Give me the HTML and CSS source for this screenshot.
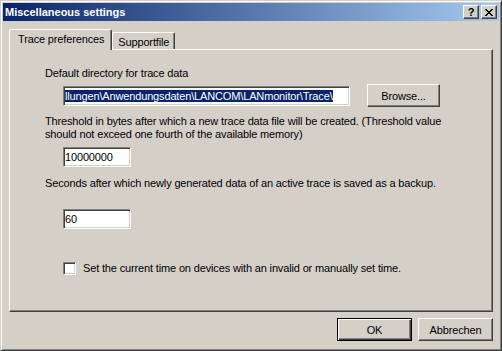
FILE: index.html
```html
<!DOCTYPE html>
<html lang="de">
<head>
  <meta charset="UTF-8">
  <meta name="viewport" content="width=device-width, initial-scale=1.0">
  <title>Miscellaneous settings</title>
  <link rel="stylesheet" href="styles.css">
</head>
<body>
  <div class="window">
    <!-- Titelleiste -->
    <div class="titlebar">
      <span class="title">Miscellaneous settings</span>
      <div class="caption-buttons">
        <button class="cap-btn help">?</button>
        <button class="cap-btn close">
          <svg width="8" height="7" viewBox="0 0 8 7">
            <path d="M0 0h2v1h1v1h2v-1h1v-1h2v1h-1v1h-1v1h-1v1h1v1h1v1h1v1h-2v-1h-1v-1h-2v1h-1v1h-2v-1h1v-1h1v-1h1v-1h-1v-1h-1z" fill="#000"/>
          </svg>
        </button>
      </div>
    </div>

    <div class="dialog-body">
      <!-- Reiter -->
      <div class="tabs">
        <div class="tab active">Trace preferences</div>
        <div class="tab">Supportfile</div>
      </div>

      <div class="tab-panel">
        <p class="label">Default directory for trace data</p>
        <div class="dir-row">
          <div class="field dir-field"><span class="selected">llungen\Anwendungsdaten\LANCOM\LANmonitor\Trace\</span></div>
          <button class="btn browse">Browse...</button>
        </div>

        <p class="label threshold">Threshold in bytes after which a new trace data file will be created. (Threshold value<br>should not exceed one fourth of the available memory)</p>
        <div class="field small size-field">10000000</div>

        <p class="label seconds">Seconds after which newly generated data of an active trace is saved as a backup.</p>
        <div class="field small backup-field">60</div>

        <label class="check-row">
          <span class="checkbox"></span>
          <span>Set the current time on devices with an invalid or manually set time.</span>
        </label>
      </div>

      <!-- Dialog-Buttons -->
      <div class="footer">
        <button class="btn default">OK</button>
        <button class="btn">Abbrechen</button>
      </div>
    </div>
  </div>
</body>
</html>
```

FILE: styles.css
```css
/* Windows-Classic Farben */
:root {
  --face: #d4d0c8;
  --shadow: #808080;
  --dark: #404040;
  --light: #ffffff;
  --select: #0a246a;
}

* {
  box-sizing: border-box;
}

body {
  margin: 0;
  background-color: var(--face);
  color: #000;
  font-family: "Liberation Sans", Arial, sans-serif;
  font-size: 11px;
  letter-spacing: -0.15px;
}

/* Fensterrahmen */
.window {
  width: 502px;
  height: 351px;
  padding: 2px;
  border: 1px solid;
  border-color: var(--face) var(--dark) var(--dark) var(--face);
  box-shadow: inset 1px 1px var(--light), inset -1px -1px var(--shadow);
  display: flex;
  flex-direction: column;
}

/* Titelleiste */
.titlebar {
  height: 18px;
  padding: 0 2px 0 2px;
  background: linear-gradient(to right, #0a246a, #a6caf0);
  display: flex;
  align-items: center;
  justify-content: space-between;
}

.title {
  color: #fff;
  font-weight: bold;
  line-height: 13px;
  letter-spacing: 0;
}

.caption-buttons {
  display: flex;
  gap: 2px;
}

.cap-btn {
  width: 16px;
  height: 14px;
  padding: 0;
  margin: 0;
  background-color: var(--face);
  border: 1px solid;
  border-color: var(--light) var(--dark) var(--dark) var(--light);
  box-shadow: inset -1px -1px var(--shadow);
  display: flex;
  align-items: center;
  justify-content: center;
  font-family: "Liberation Sans", Arial, sans-serif;
  font-weight: bold;
  font-size: 11px;
  line-height: 11px;
  color: #000;
}

.cap-btn svg {
  display: block;
  margin-top: 1px;
}

/* Inhalt */
.dialog-body {
  flex: 1;
  padding: 0 6px;
}

/* Reiter */
.tabs {
  display: flex;
  align-items: flex-end;
  height: 20px;
  margin-top: 8px;
}

.tab {
  height: 17px;
  padding: 3px 5px 0 5px;
  line-height: 13px;
  border: 1px solid;
  border-bottom: none;
  border-color: var(--light) var(--dark) transparent var(--light);
  border-radius: 2px 2px 0 0;
  box-shadow: inset -1px 0 var(--shadow);
  white-space: nowrap;
}

.tab.active {
  height: 21px;
  padding: 3px 7px 0 8px;
  margin-bottom: -1px;
  background-color: var(--face);
  position: relative;
  z-index: 1;
}

/* Reiter-Inhalt */
.tab-panel {
  height: 263px;
  padding: 17px 0 0 35px;
  border: 1px solid;
  border-color: var(--light) var(--dark) var(--dark) var(--light);
  box-shadow: inset -1px -1px var(--shadow);
}

.label {
  margin: 0;
  line-height: 13px;
}

.label.threshold {
  margin-top: 8px;
}

.label.seconds {
  margin-top: 10px;
}

.dir-row {
  display: flex;
  align-items: center;
  gap: 17px;
  margin-top: 4px;
  padding-left: 18px;
}

/* Eingabefelder */
.field {
  height: 20px;
  padding: 1px 1px 0;
  line-height: 16px;
  background-color: #fff;
  border: 1px solid;
  border-color: var(--shadow) var(--light) var(--light) var(--shadow);
  box-shadow: inset 1px 1px var(--dark), inset -1px -1px var(--face);
  white-space: nowrap;
  overflow: hidden;
}

.dir-field {
  width: 287px;
}

.selected {
  background-color: var(--select);
  color: #fff;
}

.field.small {
  width: 68px;
  margin-left: 18px;
}

.size-field {
  margin-top: 6px;
}

.backup-field {
  margin-top: 19px;
}

/* Checkbox */
.check-row {
  display: flex;
  align-items: center;
  gap: 7px;
  margin-top: 33px;
  padding-left: 18px;
  line-height: 13px;
}

.checkbox {
  width: 13px;
  height: 13px;
  background-color: #fff;
  border: 1px solid;
  border-color: var(--shadow) var(--light) var(--light) var(--shadow);
  box-shadow: inset 1px 1px var(--dark), inset -1px -1px var(--face);
}

/* Buttons */
.btn {
  width: 75px;
  height: 23px;
  padding: 0;
  margin: 0;
  background-color: var(--face);
  border: 1px solid;
  border-color: var(--light) var(--dark) var(--dark) var(--light);
  box-shadow: inset -1px -1px var(--shadow);
  font-family: "Liberation Sans", Arial, sans-serif;
  font-size: 11px;
  letter-spacing: -0.15px;
  color: #000;
}

.btn.browse {
  width: 73px;
}

.btn.default {
  border-color: #000;
  box-shadow: inset 1px 1px var(--light), inset -1px -1px var(--dark), inset -2px -2px var(--shadow);
}

.footer {
  display: flex;
  justify-content: flex-end;
  gap: 6px;
  margin-top: 6px;
}
```
